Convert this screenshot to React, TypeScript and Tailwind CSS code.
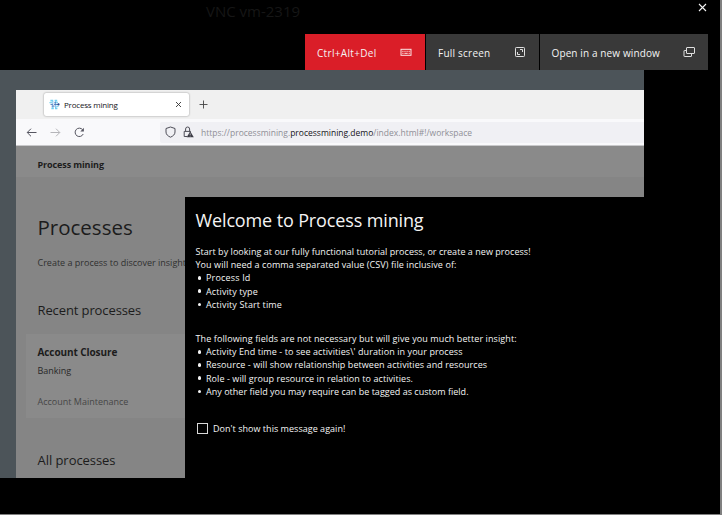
import type { ReactNode } from "react";

function Text({ className, children }: { className: string; children: ReactNode }) {
  return <div className={`whitespace-pre ${className}`}>{children}</div>;
}

function KeyboardIcon() {
  return (
    <svg className="h-3 w-3" viewBox="0 0 12 12" fill="none" stroke="#fbe6e6" strokeWidth="1">
      <rect x="1" y="3.3" width="10" height="6" />
      <path d="M2.3 5.3h1.2M4.4 5.3h1.2M6.5 5.3h1.2M8.6 5.3h1.2M2.3 7.3h1.2M4.4 7.3h3.3M8.6 7.3h1.2" />
    </svg>
  );
}

function FullScreenIcon() {
  return (
    <svg className="h-3 w-3" viewBox="0 0 12 12" fill="none" stroke="#e0e0e0" strokeWidth="1">
      <rect x="1.5" y="1.5" width="9" height="9" rx="0.8" />
      <path d="M6 3.5h2.5V6M6 8.5H3.5V6" />
    </svg>
  );
}

function WindowsIcon() {
  return (
    <svg className="h-3 w-3" viewBox="0 0 12 12" fill="none" stroke="#e0e0e0" strokeWidth="1">
      <rect x="3.5" y="1.5" width="8" height="6" rx="0.5" />
      <path d="M3.3 4.5H1.4a.4.4 0 0 0-.4.4v5.2a.4.4 0 0 0 .4.4h6.7a.4.4 0 0 0 .4-.4V8" />
    </svg>
  );
}

function ProcessLogo() {
  return (
    <svg className="h-[11px] w-[11px]" viewBox="0 0 11 11" fill="none">
      <path d="M1.4 1.6h2.8M5.6 1.6h2.6M2.4 9.4h2.4M6 9.4h2.4" stroke="#6fd0f2" strokeWidth="1.7" />
      <path d="M.4 3.6h2.6M7.2 7.4h2.4M7 3.4h2" stroke="#86d6ef" strokeWidth="1.2" />
      <path d="M3.8 2v7M6.6 2v7" stroke="#7fc0ee" strokeWidth="1" />
      <path d="M1.5 5.4h2.3M5 5.4h5M5.2 3.8h1.8M2.6 7.1h3" stroke="#3f6db5" strokeWidth="0.9" />
      <circle cx="9.5" cy="5.4" r="1.1" fill="#284b91" />
    </svg>
  );
}

function BrowserTabs() {
  return (
    <div className="flex h-[29px] bg-[#f0f0f0] pt-[3px] pl-7">
      <div className="flex h-[23px] w-[145px] items-center rounded-[2px] bg-white pr-[7px] pl-[5px] shadow-[0_0_2px_#00000070]">
        <ProcessLogo />
        <Text className="ml-[4px] text-[8px] leading-[12px] tracking-[-0.21px] text-[#15141a]">Process mining</Text>
        <svg className="ml-auto h-[7px] w-[7px]" viewBox="0 0 7 7" stroke="#333" strokeWidth="0.9">
          <path d="M1 1l5 5M6 1L1 6" />
        </svg>
      </div>
      <svg className="mt-[7px] ml-[10px] h-[9px] w-[9px]" viewBox="0 0 9 9" stroke="#444" strokeWidth="0.9">
        <path d="M4.5 .5v8M.5 4.5h8" />
      </svg>
    </div>
  );
}

function BrowserToolbar() {
  return (
    <div className="flex h-[27px] items-center border-b border-[#c8c8ca] bg-[#f9f9fb] pl-[10px]">
      <svg className="h-[11px] w-[11px]" viewBox="0 0 11 11" fill="none" stroke="#555560" strokeWidth="1">
        <path d="M10.5 5.5H1.3M5 1.7L1.2 5.5 5 9.3" />
      </svg>
      <svg className="ml-[13px] h-[11px] w-[11px]" viewBox="0 0 11 11" fill="none" stroke="#b5b5b9" strokeWidth="1">
        <path d="M.5 5.5h9.2M6 1.7l3.8 3.8L6 9.3" />
      </svg>
      <svg className="ml-[13px] h-[11px] w-[11px]" viewBox="0 0 11 11" fill="none" stroke="#555560" strokeWidth="1">
        <path d="M9.2 7A4.2 4.2 0 1 1 8.6 2.7" />
        <path d="M9.9 .8v3.6H6.3z" fill="#555560" stroke="none" />
      </svg>
      <div className="ml-[75px] flex h-[21px] flex-1 items-center rounded-l-[2px] bg-[#f0f0f4] pl-[5px]">
        <svg className="h-[12px] w-[11px]" viewBox="0 0 11 12" fill="none" stroke="#4e4e58" strokeWidth="1">
          <path d="M5.5 1L10 2.5V6C10 8.6 8 10.1 5.5 11.2 3 10.1 1 8.6 1 6V2.5z" strokeLinejoin="round" />
        </svg>
        <svg className="ml-[7px] h-[12px] w-[11px]" viewBox="0 0 11 12" fill="none" stroke="#4e4e58" strokeWidth="1">
          <path d="M4 10.5H1.2V5.4h6.6M2.6 5.3V3a2 2 0 0 1 4 0v2.5" />
          <path d="M7.2 5.2L10.8 11.3H3.7z" fill="#3c3c46" stroke="none" />
          <path d="M7.2 7.4v1.8M7.2 9.8v.7" stroke="#f0f0f4" strokeWidth="0.6" />
        </svg>
        <Text className="mt-px ml-[7px] text-[8.5px] leading-[12px] text-[#8f8f96]">
          https://processmining.<span className="text-[#15141a]">processmining.demo</span>/index.html#!/workspace
        </Text>
      </div>
    </div>
  );
}

function Bullet({ className, children }: { className: string; children: ReactNode }) {
  return (
    <li className="flex h-[13.2px] items-center pl-[2px]">
      <span className="mr-[5px] h-[3.5px] w-[3.5px] rounded-full bg-[#f4f4f4]" />
      <Text className={className}>{children}</Text>
    </li>
  );
}

function WelcomeDialog() {
  return (
    <div className="absolute top-[107px] left-[169px] h-[281px] w-[459px] bg-black pt-[11px] pl-[10.5px] text-[9px] leading-[13.2px] text-[#f4f4f4]">
      <Text className="text-[18px] leading-[25px] tracking-[-0.13px]">Welcome to Process mining</Text>
      <Text className="mt-[12px] tracking-[0.04px]">Start by looking at our fully functional tutorial process, or create a new process!</Text>
      <Text className="tracking-[0.08px]">You will need a comma separated value (CSV) file inclusive of:</Text>
      <ul>
        <Bullet className="tracking-[0.17px]">Process Id</Bullet>
        <Bullet className="tracking-[0.1px]">Activity type</Bullet>
        <Bullet className="tracking-[0.13px]">Activity Start time</Bullet>
      </ul>
      <Text className="mt-[21px] tracking-[0.1px]">The following fields are not necessary but will give you much better insight:</Text>
      <ul>
        <Bullet className="tracking-[0.08px]">Activity End time - to see activities\' duration in your process</Bullet>
        <Bullet className="tracking-[0.07px]">Resource - will show relationship between activities and resources</Bullet>
        <Bullet className="tracking-[0.07px]">Role - will group resource in relation to activities.</Bullet>
        <Bullet className="tracking-[0.02px]">Any other field you may require can be tagged as custom field.</Bullet>
      </ul>
      <div className="mt-[24px] flex items-center">
        <span className="ml-[1.5px] h-[11px] w-[11px] border border-[#d8d8d8]" />
        <Text className="ml-[5px] tracking-[0.03px]">Don't show this message again!</Text>
      </div>
    </div>
  );
}

function ProcessPage() {
  return (
    <div className="flex-1 bg-[#858585] text-[#1c1c1c]">
      <div className="flex h-[31px] items-center bg-[#8a8a8a] pl-[21.5px]">
        <Text className="mt-[6px] text-[9px] leading-[13px] font-bold tracking-[-0.1px]">Process mining</Text>
      </div>
      <div className="pt-[36px] pl-[21.5px]">
        <Text className="text-[20.5px] leading-[28px]">Processes</Text>
        <Text className="mt-[15px] text-[9px] leading-[13px] text-[#303030]">Create a process to discover insight</Text>
        <Text className="mt-[32px] text-[13px] leading-[18px] tracking-[-0.11px]">Recent processes</Text>
      </div>
      <div className="mt-[15px] ml-[10px] h-[84px] bg-[#8a8a8a] pt-[11px] pl-[11.5px]">
        <Text className="text-[10px] leading-[14px] font-bold tracking-[-0.09px]">Account Closure</Text>
        <Text className="mt-[5px] text-[9px] leading-[13px] text-[#282828]">Banking</Text>
        <Text className="mt-[18px] text-[9px] leading-[13px] text-[#464646]">Account Maintenance</Text>
      </div>
      <Text className="mt-[33px] ml-[21.5px] text-[13px] leading-[18px] tracking-[-0.05px]">All processes</Text>
    </div>
  );
}

export default function App() {
  return (
    <div className="h-[516px] w-[722px] bg-white">
      <div className="flex h-[515px] w-[722px] flex-col overflow-hidden border-r-2 border-b border-[#808080] bg-black font-['Open_Sans',sans-serif]">
        <div className="flex h-[34px] shrink-0 justify-between pr-[13px] pl-[206px]">
          <Text className="mt-px text-[15px] leading-[20px] text-[#161616]">VNC vm-2319</Text>
          <svg className="mt-[2.5px] h-[9px] w-[9px]" viewBox="0 0 9 9" stroke="#f4f4f4" strokeWidth="1.1">
            <path d="M1 1l7 7M8 1L1 8" />
          </svg>
        </div>
        <div className="flex h-9 w-[708px] shrink-0 justify-end text-[10px] leading-[14px] text-[#f4f4f4]">
          <button className="flex w-[120px] items-center justify-between bg-[#da1e28] pr-[13px] pl-[12px]">
            <Text className="mt-px tracking-[0.32px]">Ctrl+Alt+Del</Text>
            <KeyboardIcon />
          </button>
          <button className="ml-px flex w-[113px] items-center justify-between bg-[#393939] pr-[13px] pl-[12px]">
            <Text className="mt-px tracking-[0.23px]">Full screen</Text>
            <FullScreenIcon />
          </button>
          <button className="ml-px flex w-[168px] items-center justify-between bg-[#393939] pr-[13px] pl-[11.5px]">
            <Text className="mt-px tracking-[0.12px]">Open in a new window</Text>
            <WindowsIcon />
          </button>
        </div>
        <div className="h-[408px] w-[644px] shrink-0 overflow-hidden bg-[#4c5459] pt-5 pl-4">
          <div className="relative flex h-[388px] flex-col">
            <BrowserTabs />
            <BrowserToolbar />
            <ProcessPage />
            <WelcomeDialog />
          </div>
        </div>
      </div>
    </div>
  );
}
